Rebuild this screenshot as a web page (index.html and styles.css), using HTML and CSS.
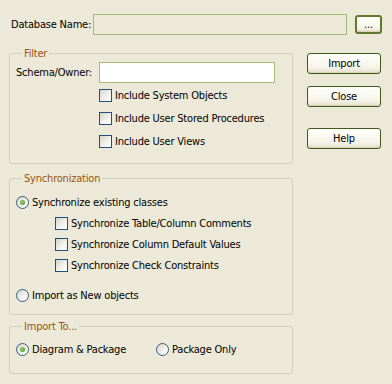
FILE: index.html
```html
<!DOCTYPE html>
<html lang="en">
<head>
    <meta charset="UTF-8">
    <title>Import Database Schema</title>
    <link rel="stylesheet" href="styles.css">
</head>
<body>
    <div class="dialog">
        <div class="top-row">
            <label class="db-label">Database Name:</label>
            <div class="edit disabled db-edit"></div>
            <button class="btn browse" type="button">...</button>
        </div>

        <div class="main">
            <div class="groups">
                <fieldset class="group filter">
                    <legend>Filter</legend>
                    <div class="schema-row">
                        <label class="schema-label">Schema/Owner:</label>
                        <div class="edit schema-edit"></div>
                    </div>
                    <div class="check-list filter-checks">
                        <div class="opt"><span class="check"></span>Include System Objects</div>
                        <div class="opt"><span class="check"></span>Include User Stored Procedures</div>
                        <div class="opt"><span class="check"></span>Include User Views</div>
                    </div>
                </fieldset>

                <fieldset class="group sync">
                    <legend>Synchronization</legend>
                    <div class="opt"><span class="radio on"></span>Synchronize existing classes</div>
                    <div class="check-list sync-checks">
                        <div class="opt"><span class="check"></span>Synchronize Table/Column Comments</div>
                        <div class="opt"><span class="check"></span>Synchronize Column Default Values</div>
                        <div class="opt"><span class="check"></span>Synchronize Check Constraints</div>
                    </div>
                    <div class="opt new-objects"><span class="radio"></span>Import as New objects</div>
                </fieldset>

                <fieldset class="group import-to">
                    <legend>Import To...</legend>
                    <div class="radio-row">
                        <div class="opt diagram"><span class="radio on"></span>Diagram &amp; Package</div>
                        <div class="opt"><span class="radio"></span>Package Only</div>
                    </div>
                </fieldset>
            </div>

            <div class="buttons">
                <button class="btn cmd" type="button">Import</button>
                <button class="btn cmd" type="button">Close</button>
                <button class="btn cmd help" type="button">Help</button>
            </div>
        </div>
    </div>
</body>
</html>
```

FILE: styles.css
```css
body {
    margin: 0;
    background-color: #ece9d8;
    font-family: "DejaVu Sans Condensed", "Liberation Sans", sans-serif;
    font-size: 11px;
    letter-spacing: -0.2px;
    color: #000;
}
.dialog {
    padding: 14px 0 0 9px;
}
.top-row {
    display: flex;
    align-items: center;
    height: 21px;
}
.db-label {
    width: 84px;
    padding-left: 2px;
    box-sizing: border-box;
    white-space: nowrap;
}
.edit {
    height: 21px;
    box-sizing: border-box;
    border: 1px solid #a5b97b;
    background-color: #fff;
}
.edit.disabled {
    background-color: #ece9d8;
}
.db-edit {
    width: 254px;
}
.btn {
    font-family: inherit;
    font-size: 11px;
    letter-spacing: inherit;
    color: #000;
    padding: 0;
    border: 1px solid #3f5a1e;
    border-radius: 3px;
    background: linear-gradient(#fffffb, #f6f4ea 70%, #e4e0cc);
    box-shadow: inset 0 -1px 0 #d8d2b4;
}
.browse {
    width: 27px;
    height: 19px;
    margin-left: 8px;
    line-height: 13px;
    border-width: 2px;
    border-color: #5f7a2e;
}
.main {
    display: flex;
    margin-top: 12px;
}
.groups {
    width: 284px;
}
.group {
    margin: 0;
    border: 1px solid #d0d0bf;
    border-radius: 3px;
    padding: 0 0 0 6px;
}
.group legend {
    color: #9a5414;
    padding: 0 2px;
    margin-left: 6px;
    line-height: 13px;
}
.opt {
    display: flex;
    align-items: center;
    height: 13px;
    line-height: 13px;
    white-space: nowrap;
}
.check, .radio {
    width: 13px;
    height: 13px;
    box-sizing: border-box;
    flex: none;
    margin-right: 3px;
    border: 1px solid #1c5180;
    background: linear-gradient(135deg, #d6d4c8, #f4f3ee 60%, #fff);
}
.radio {
    border-radius: 50%;
    border-color: #2f5f86;
    display: flex;
    align-items: center;
    justify-content: center;
}
.radio.on::after {
    content: "";
    width: 5px;
    height: 5px;
    border-radius: 50%;
    background: radial-gradient(circle at 40% 40%, #9ed16f, #3f8a1e);
}

/* filter group */
.filter {
    padding-top: 2px;
    padding-bottom: 15px;
}
.schema-row {
    display: flex;
    align-items: center;
}
.schema-label {
    width: 83px;
}
.schema-edit {
    width: 176px;
}
.check-list {
    display: flex;
    flex-direction: column;
}
.filter-checks {
    margin: 6px 0 0 83px;
    gap: 10px;
}

/* synchronization group */
.sync {
    margin-top: 8px;
    padding-top: 11px;
    padding-bottom: 12px;
}
.sync-checks {
    margin: 8px 0 0 39px;
    gap: 8px;
}
.new-objects {
    margin-top: 17px;
}

/* import to group */
.import-to {
    margin-top: 5px;
    padding-top: 10px;
    padding-bottom: 17px;
}
.radio-row {
    display: flex;
}
.diagram {
    width: 140px;
}

.buttons {
    display: flex;
    flex-direction: column;
    margin: 6px 0 0 14px;
}
.cmd {
    width: 74px;
    height: 21px;
    margin-bottom: 12px;
}
.cmd.help {
    margin-top: 9px;
}
```
